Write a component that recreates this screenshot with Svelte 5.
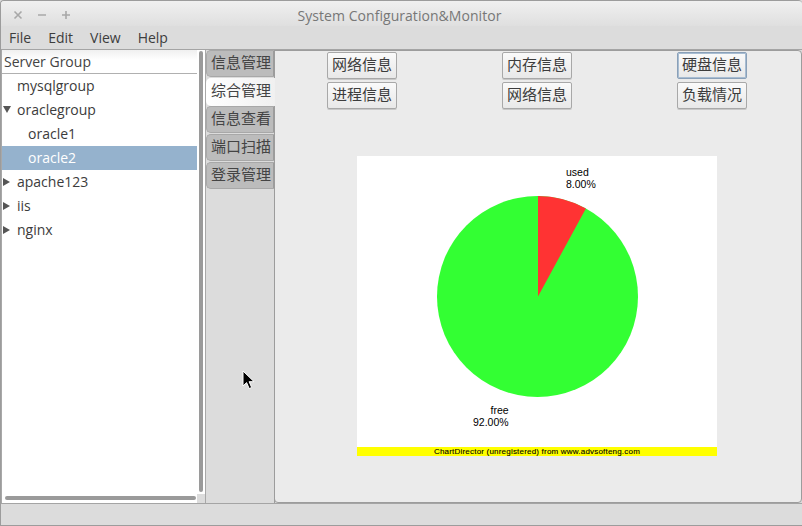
<script>
  const menus = ['File', 'Edit', 'View', 'Help'];
  const tree = [
    { label: 'mysqlgroup', level: 1 },
    { label: 'oraclegroup', level: 1, arrow: 'down' },
    { label: 'oracle1', level: 2 },
    { label: 'oracle2', level: 2, selected: true },
    { label: 'apache123', level: 1, arrow: 'right' },
    { label: 'iis', level: 1, arrow: 'right' },
    { label: 'nginx', level: 1, arrow: 'right' }
  ];
  const tabs = [
    { label: '信息管理' },
    { label: '综合管理', active: true },
    { label: '信息查看' },
    { label: '端口扫描' },
    { label: '登录管理' }
  ];
  const buttons = [
    { label: '网络信息' },
    { label: '内存信息' },
    { label: '硬盘信息', focused: true },
    { label: '进程信息' },
    { label: '网络信息' },
    { label: '负载情况' }
  ];
</script>

<div class="window">
  <header class="titlebar">
    <div class="controls">
      <svg width="10" height="10" viewBox="0 0 10 10"><path d="M1.5 1.5l7 7M8.5 1.5l-7 7" /></svg>
      <svg width="10" height="10" viewBox="0 0 10 10"><path d="M1 5h8" /></svg>
      <svg width="10" height="10" viewBox="0 0 10 10"><path d="M1 5h8M5 1v8" /></svg>
    </div>
    <div class="title">System Configuration&amp;Monitor</div>
  </header>

  <nav class="menubar">
    {#each menus as m}<span>{m}</span>{/each}
  </nav>

  <main class="main">
    <section class="treewrap">
      <div class="tree">
        <div class="treehead">Server Group</div>
        {#each tree as item}
          <div class="row" class:selected={item.selected} class:l2={item.level === 2}>
            {#if item.arrow}<i class="arrow {item.arrow}"></i>{/if}
            {item.label}
          </div>
        {/each}
        <div class="hscroll"><div class="hthumb"></div></div>
      </div>
      <div class="vscroll"><div class="vthumb"></div><div class="corner"></div></div>
    </section>

    <div class="tabs">
      {#each tabs as t}
        <div class="tab" class:active={t.active}>{t.label}</div>
      {/each}
    </div>

    <section class="panel">
      <div class="buttons">
        {#each buttons as b}
          <button class:focused={b.focused}>{b.label}</button>
        {/each}
      </div>
      <div class="chart">
        <div class="plot">
          <span class="label used">used<br />8.00%</span>
          <svg class="pie" width="201" height="201" viewBox="0 0 201 201">
            <circle cx="100.5" cy="100.5" r="100.5" fill="#33ff33" />
            <path d="M101 100.5V0A100.5 100.5 0 0 1 148.9 12.4Z" fill="#ff3333" />
          </svg>
          <span class="label free">free<br />92.00%</span>
        </div>
        <div class="watermark">ChartDirector (unregistered) from www.advsofteng.com</div>
      </div>
    </section>
  </main>

  <footer class="status"></footer>

  <svg class="cursor" width="14" height="21" viewBox="0 0 14 21">
    <path d="M1 1v15l3.6-3.4 2.6 6 2.5-1.1-2.6-5.8h5z" fill="#000" stroke="#fff" stroke-width="1" />
  </svg>
</div>

<style>
  :global(body) {
    margin: 0;
    background: #dcdcdc;
  }
  .window {
    position: relative;
    width: 802px;
    height: 526px;
    box-sizing: border-box;
    display: flex;
    flex-direction: column;
    overflow: hidden;
    background: #dcdcdc;
    border-top: 1px solid #9c9c9c;
    border-left: 1px solid #9c9c9c;
    border-bottom: 1px solid #9c9c9c;
    border-radius: 4px 4px 0 0;
    font-family: "Open Sans", "Noto Sans CJK SC", sans-serif;
    font-size: 14px;
    color: #3c3c3c;
  }
  .titlebar {
    flex: none;
    height: 25px;
    position: relative;
    display: flex;
    align-items: center;
    justify-content: center;
    background: linear-gradient(#f0f0f0, #dfdfdf);
  }
  .controls {
    position: absolute;
    left: 12px;
    top: 9px;
    display: flex;
    gap: 14px;
  }
  .controls svg {
    display: block;
  }
  .controls path {
    fill: none;
    stroke: #a8a8a8;
    stroke-width: 1.6;
  }
  .title {
    font-size: 14px;
    color: #777;
    padding: 4px 1px 0 0;
    margin-right: 3px;
    letter-spacing: 0.05px;
  }
  .menubar {
    flex: none;
    height: 24px;
    display: flex;
    gap: 17px;
    padding: 0 0 0 8px;
    align-items: center;
    font-size: 14px;
    color: #3d3d3d;
    border-bottom: 1px solid #a4a4a4;
    box-sizing: border-box;
  }
  .main {
    flex: 1;
    min-height: 0;
    display: flex;
  }
  .treewrap {
    flex: none;
    width: 205px;
    display: flex;
    border-right: 1px solid #a8a8a8;
    box-sizing: border-box;
  }
  .tree {
    flex: none;
    width: 196px;
    background: #fff;
    border-left: 1px solid #a8a8a8;
    box-sizing: border-box;
    display: flex;
    flex-direction: column;
  }
  .treehead {
    flex: none;
    height: 24px;
    box-sizing: border-box;
    padding-left: 2px;
    line-height: 23px;
    background: linear-gradient(#f0f0f0 0, #fff 45%);
    border-bottom: 1px solid #b0b0b0;
    color: #444;
  }
  .row {
    flex: none;
    height: 24px;
    line-height: 24px;
    padding-left: 15px;
    position: relative;
    color: #3c3c3c;
  }
  .row.l2 {
    padding-left: 26px;
  }
  .row.selected {
    background: #95b2cd;
    color: #fff;
  }
  .arrow {
    position: absolute;
    left: 1px;
    top: 8px;
    width: 0;
    height: 0;
  }
  .arrow.down {
    border-left: 4px solid transparent;
    border-right: 4px solid transparent;
    border-top: 7px solid #555;
  }
  .arrow.right {
    border-top: 4px solid transparent;
    border-bottom: 4px solid transparent;
    border-left: 7px solid #555;
  }
  .hscroll {
    margin-top: auto;
    flex: none;
    height: 9px;
    padding: 2px 0 3px 3px;
    box-sizing: border-box;
    background: #fff;
  }
  .hthumb {
    width: 191px;
    height: 4px;
    background: #9a9a9a;
    border-radius: 2px;
  }
  .vscroll {
    flex: 1;
    background: #fff;
    display: flex;
    flex-direction: column;
    align-items: center;
    padding-top: 1px;
    box-sizing: border-box;
  }
  .vthumb {
    flex: 1;
    width: 4px;
    background: #9a9a9a;
    border-radius: 2px;
    margin-bottom: 2px;
  }
  .corner {
    flex: none;
    align-self: stretch;
    height: 9px;
    background: #dcdcdc;
  }
  .tabs {
    flex: none;
    width: 69px;
    display: flex;
    flex-direction: column;
    box-sizing: border-box;
    background: #dcdcdc;
    border-right: 1px solid #9c9c9c;
    margin-right: -1px;
    position: relative;
    z-index: 1;
    font-size: 15px;
  }
  .tab {
    height: 27px;
    margin-bottom: 1px;
    box-sizing: border-box;
    line-height: 23px;
    padding-left: 4px;
    white-space: nowrap;
    background: #bcbcbc;
    color: #444;
    border: 1px solid #a8a8a8;
    border-right: 1px solid #9c9c9c;
    border-radius: 5px 0 0 5px;
  }
  .tab.active {
    border: none;
    height: 28px;
    padding-left: 5px;
    line-height: 25px;
    margin-right: -1px;
    margin-bottom: 0;
    background: linear-gradient(90deg, #fff, #f0f0f0);
  }
  .panel {
    flex: 1;
    min-width: 0;
    box-sizing: border-box;
    background: #ebebeb;
    border: 1px solid #9c9c9c;
    border-radius: 0 4px 4px 4px;
    padding-top: 1px;
    display: flex;
    flex-direction: column;
    align-items: center;
  }
  .buttons {
    width: 420px;
    margin-left: -2px;
    display: grid;
    grid-template-columns: repeat(3, 70px);
    justify-content: space-between;
    row-gap: 3px;
  }
  button {
    width: 70px;
    height: 27px;
    padding: 0 0 5px;
    box-sizing: border-box;
    border: 1px solid #a8a8a8;
    border-radius: 2px;
    background: linear-gradient(#fafafa, #e8e8e8);
    box-shadow: 0 1px 0 #c8c8c8;
    font-family: inherit;
    font-size: 15px;
    color: #3c3c3c;
    white-space: nowrap;
  }
  button.focused {
    border-color: #8aa0b8;
    box-shadow: 0 0 0 1px #a8bdd2 inset;
  }
  .chart {
    margin-top: 47px;
    margin-left: -2px;
    width: 360px;
    height: 300px;
    background: #fff;
    display: flex;
    flex-direction: column;
  }
  .plot {
    flex: 1;
    position: relative;
  }
  .pie {
    position: absolute;
    left: 80px;
    top: 40px;
  }
  .label {
    position: absolute;
    font-family: "Liberation Sans", Arial, sans-serif;
    font-size: 10.5px;
    line-height: 12px;
    color: #000;
  }
  .used {
    left: 209px;
    top: 10px;
  }
  .free {
    left: 116px;
    top: 248px;
    text-align: right;
  }
  .watermark {
    flex: none;
    height: 9px;
    background: #ffff00;
    color: #000;
    font-family: "Liberation Sans", Arial, sans-serif;
    font-size: 8px;
    line-height: 9px;
    text-align: center;
    letter-spacing: 0.2px;
    -webkit-text-stroke: 0.1px #000;
  }
  .status {
    flex: none;
    height: 22px;
    background: #dcdcdc;
    border-top: 1px solid #a4a4a4;
    box-sizing: border-box;
  }
  .cursor {
    position: absolute;
    left: 241px;
    top: 369px;
    z-index: 5;
  }
</style>
